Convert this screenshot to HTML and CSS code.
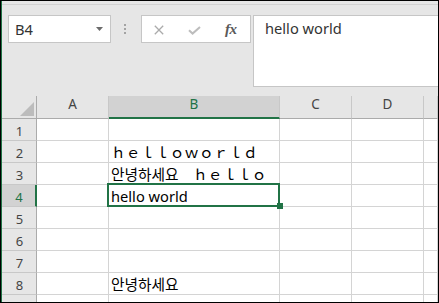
FILE: index.html
```html
<!DOCTYPE html>
<html>
<head>
<meta charset="utf-8">
<link rel="stylesheet" href="styles.css">
</head>
<body>
<div class="frame">
  <div class="app">
    <div class="topedge"></div>
    <div class="fbar">
      <div class="namebox">
        <span class="ref">B4</span>
        <svg class="drop" width="7" height="4" viewBox="0 0 7 4"><polygon points="0,0 7,0 3.5,4" fill="#6b6b6b"/></svg>
      </div>
      <div class="grip"><i></i><i></i><i></i></div>
      <div class="tools">
        <svg class="ico-x" width="10" height="10" viewBox="0 0 10 10"><path d="M0.8 0.8 L9.2 9.2 M9.2 0.8 L0.8 9.2" stroke="#ababab" stroke-width="1.3" fill="none"/></svg>
        <svg class="ico-ok" width="13" height="9" viewBox="0 0 13 9"><path d="M1 4.2 L4.6 7.6 L12 1" stroke="#bdbdbd" stroke-width="2" fill="none"/></svg>
        <span class="fx">fx</span>
      </div>
      <div class="formula">hello world</div>
    </div>
    <div class="sheet">
      <div class="grid">
        <div class="corner"><svg width="14" height="14" viewBox="0 0 14 14"><polygon points="14,0 14,14 0,14" fill="#bcbcbc"/></svg></div>
        <div class="ch">A</div>
        <div class="ch ch-sel">B</div>
        <div class="ch">C</div>
        <div class="ch">D</div>
        <div class="ch"></div>

        <div class="rh">1</div><div class="c"></div><div class="c"></div><div class="c"></div><div class="c"></div><div class="c"></div>
        <div class="rh">2</div><div class="c"></div><div class="c">ｈｅｌｌｏｗｏｒｌｄ</div><div class="c"></div><div class="c"></div><div class="c"></div>
        <div class="rh">3</div><div class="c"></div><div class="c">안녕하세요　ｈｅｌｌｏ</div><div class="c"></div><div class="c"></div><div class="c"></div>
        <div class="rh rh-sel">4</div><div class="c"></div><div class="c">hello world</div><div class="c"></div><div class="c"></div><div class="c"></div>
        <div class="rh">5</div><div class="c"></div><div class="c"></div><div class="c"></div><div class="c"></div><div class="c"></div>
        <div class="rh">6</div><div class="c"></div><div class="c"></div><div class="c"></div><div class="c"></div><div class="c"></div>
        <div class="rh">7</div><div class="c"></div><div class="c"></div><div class="c"></div><div class="c"></div><div class="c"></div>
        <div class="rh">8</div><div class="c"></div><div class="c">안녕하세요</div><div class="c"></div><div class="c"></div><div class="c"></div>
        <div class="rh"></div><div class="c"></div><div class="c"></div><div class="c"></div><div class="c"></div><div class="c"></div>
      </div>
      <div class="sel"></div>
      <div class="handle"></div>
    </div>
  </div>
</div>
</body>
</html>
```

FILE: styles.css
```css
* { box-sizing: border-box; }
html, body { margin: 0; padding: 0; background: #fff; }
.frame {
  width: 439px;
  height: 303px;
  border: 1px solid #000;
}
.app {
  height: 301px;
  border-left: 1px solid #217346;
  background: #e6e6e6;
  display: flex;
  flex-direction: column;
  overflow: hidden;
  font-family: "Noto Sans", "Noto Sans CJK KR", sans-serif;
}
.topedge {
  height: 4px;
  flex: none;
  border-bottom: 1px solid #d2d2d2;
}
.fbar {
  height: 91px;
  flex: none;
  display: flex;
  align-items: flex-start;
  padding-top: 10px;
  padding-left: 6px;
}
.namebox {
  width: 103px;
  height: 28px;
  background: #fff;
  border: 1px solid #c6c6c6;
  display: flex;
  align-items: center;
  justify-content: space-between;
  padding: 0 7px 0 6px;
}
.ref {
  font-size: 14.667px;
  line-height: 26px;
  color: #333;
}
.drop { margin-top: -1px; }
.grip {
  width: 30px;
  height: 28px;
  display: flex;
  flex-direction: column;
  align-items: flex-start;
  padding: 9px 0 0 13px;
  gap: 2px;
}
.grip i {
  display: block;
  width: 2px;
  height: 2px;
  background: #a3a3a3;
}
.tools {
  width: 110px;
  height: 28px;
  background: #fff;
  border: 1px solid #c6c6c6;
  display: flex;
  align-items: center;
  padding-left: 12px;
}
.ico-x { margin-top: 2px; }
.ico-ok { margin-left: 24px; margin-top: 3px; }
.fx {
  margin-left: 24px;
  font-family: "Liberation Serif", serif;
  font-style: italic;
  font-weight: bold;
  font-size: 15px;
  line-height: 20px;
  color: #5a5a5a;
  letter-spacing: -0.5px;
}
.formula {
  flex: 1;
  height: 72px;
  margin-left: 2px;
  background: #fff;
  border: 1px solid #c6c6c6;
  border-right: none;
  padding: 2px 0 0 11px;
  font-size: 14.667px;
  line-height: 20px;
  color: #333;
}
.sheet {
  position: relative;
  flex: 1;
  overflow: hidden;
}
.grid {
  display: grid;
  grid-template-columns: 35px 72px 171px 72px 72px 1fr;
  grid-template-rows: 23px repeat(9, 22px);
}
.corner {
  border-right: 1px solid #ababab;
  border-bottom: 1px solid #ababab;
  display: flex;
  justify-content: flex-end;
  align-items: flex-end;
  padding: 0 2px 2px 0;
}
.ch {
  border-right: 1px solid #c8c8c8;
  border-bottom: 1px solid #ababab;
  text-align: center;
  font-size: 13.5px;
  line-height: 17px;
  color: #444;
}
.ch-sel {
  background: #d2d2d2;
  border-bottom: 2px solid #217346;
  color: #217346;
}
.rh {
  border-right: 1px solid #ababab;
  border-bottom: 1px solid #c8c8c8;
  display: flex;
  align-items: flex-end;
  justify-content: center;
  padding-left: 1px;
  font-size: 13px;
  line-height: 18px;
  color: #444;
}
.rh-sel {
  background: #d2d2d2;
  border-right: 2px solid #217346;
  color: #217346;
}
.c {
  background: #fff;
  border-right: 1px solid #d4d4d4;
  border-bottom: 1px solid #d4d4d4;
  display: flex;
  align-items: flex-end;
  padding-left: 2px;
  font-size: 14.667px;
  line-height: 20px;
  color: #000;
  white-space: nowrap;
  overflow: visible;
}
.sel {
  position: absolute;
  left: 105px;
  top: 87px;
  width: 173px;
  height: 24px;
  border: 2px solid #217346;
}
.handle {
  position: absolute;
  left: 275px;
  top: 107px;
  width: 6px;
  height: 6px;
  background: #217346;
}
```
